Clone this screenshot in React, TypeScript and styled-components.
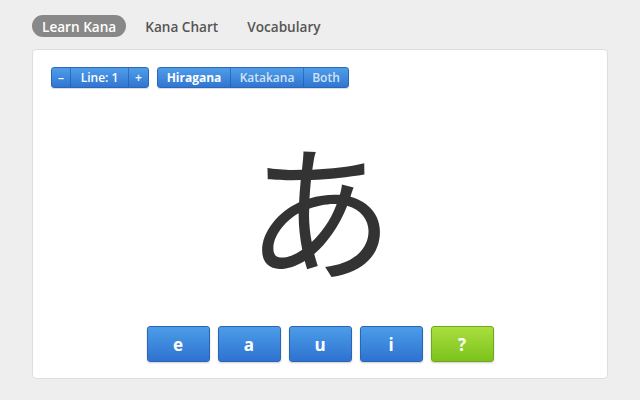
import React from "react";
import styled, { createGlobalStyle } from "styled-components";

const Global = createGlobalStyle`
  html, body { margin: 0; padding: 0; background: #eeeeee; }
  body { font-family: "Open Sans", "Noto Sans", sans-serif; }
  * { box-sizing: border-box; }
`;

const Page = styled.div`
  width: 640px;
  height: 400px;
  padding: 15px 32px 0 32px;
  display: flex;
  flex-direction: column;
`;

const Nav = styled.nav`
  display: flex;
  height: 22px;
`;

const Tab = styled.div<{ $active?: boolean }>`
  height: 22px;
  padding: 0 10px;
  margin-right: 9px;
  border-radius: 11px;
  display: flex;
  align-items: center;
  font-size: 13.6px;
  font-weight: 600;
  color: ${(p) => (p.$active ? "#ffffff" : "#555555")};
  background: ${(p) => (p.$active ? "#888888" : "transparent")};
`;

const Card = styled.main`
  margin-top: 12px;
  width: 576px;
  height: 330px;
  background: #ffffff;
  border: 1px solid #dedede;
  border-radius: 4px;
  padding: 17px 18px 16px 18px;
  display: flex;
  flex-direction: column;
`;

const Toolbar = styled.div`
  display: flex;
  gap: 8px;
  height: 21px;
`;

const Group = styled.div`
  display: flex;
  height: 21px;
  border-radius: 3px;
  overflow: hidden;
  border: 1px solid #2b66b8;
  box-shadow: 0 1px 1px rgba(0, 0, 0, 0.15);
  background: linear-gradient(#4f9de8, #3176d2);
`;

const Seg = styled.div<{ $w: number; $dim?: boolean; $bold?: boolean }>`
  width: ${(p) => p.$w}px;
  display: flex;
  align-items: center;
  justify-content: center;
  font-size: 12px;
  font-weight: ${(p) => (p.$bold ? 700 : 600)};
  color: ${(p) => (p.$dim ? "#d3e3f6" : "#ffffff")};
  border-left: 1px solid rgba(30, 80, 160, 0.55);
  &:first-child { border-left: none; }
`;

const KanaArea = styled.div`
  flex: 1;
  display: flex;
  align-items: center;
  justify-content: center;
`;

const Kana = styled.div`
  font-family: "Noto Sans CJK JP", sans-serif;
  font-size: 148px;
  line-height: 1;
  color: #333333;
  font-weight: 400;
  margin-top: -4px;
`;

const Answers = styled.div`
  display: flex;
  justify-content: center;
  gap: 8px;
  height: 36px;
`;

const Answer = styled.div<{ $green?: boolean }>`
  width: 63px;
  height: 36px;
  border-radius: 3px;
  display: flex;
  align-items: center;
  justify-content: center;
  font-size: 17px;
  font-weight: 700;
  color: #ffffff;
  background: ${(p) =>
    p.$green
      ? "linear-gradient(#a8de3e, #7dc31d)"
      : "linear-gradient(#4b9de8, #2f72d0)"};
  border: 1px solid ${(p) => (p.$green ? "#6fa81c" : "#2a64b6")};
  box-shadow: 0 1px 2px rgba(0, 0, 0, 0.2);
`;

export default function App() {
  return (
    <>
      <Global />
      <Page>
        <Nav>
          <Tab $active>Learn Kana</Tab>
          <Tab>Kana Chart</Tab>
          <Tab>Vocabulary</Tab>
        </Nav>
        <Card>
          <Toolbar>
            <Group>
              <Seg $w={18}>–</Seg>
              <Seg $w={58}>Line: 1</Seg>
              <Seg $w={20}>+</Seg>
            </Group>
            <Group>
              <Seg $w={72} $bold>Hiragana</Seg>
              <Seg $w={73} $dim>Katakana</Seg>
              <Seg $w={45} $dim>Both</Seg>
            </Group>
          </Toolbar>
          <KanaArea>
            <Kana>あ</Kana>
          </KanaArea>
          <Answers>
            <Answer>e</Answer>
            <Answer>a</Answer>
            <Answer>u</Answer>
            <Answer>i</Answer>
            <Answer $green>?</Answer>
          </Answers>
        </Card>
      </Page>
    </>
  );
}
